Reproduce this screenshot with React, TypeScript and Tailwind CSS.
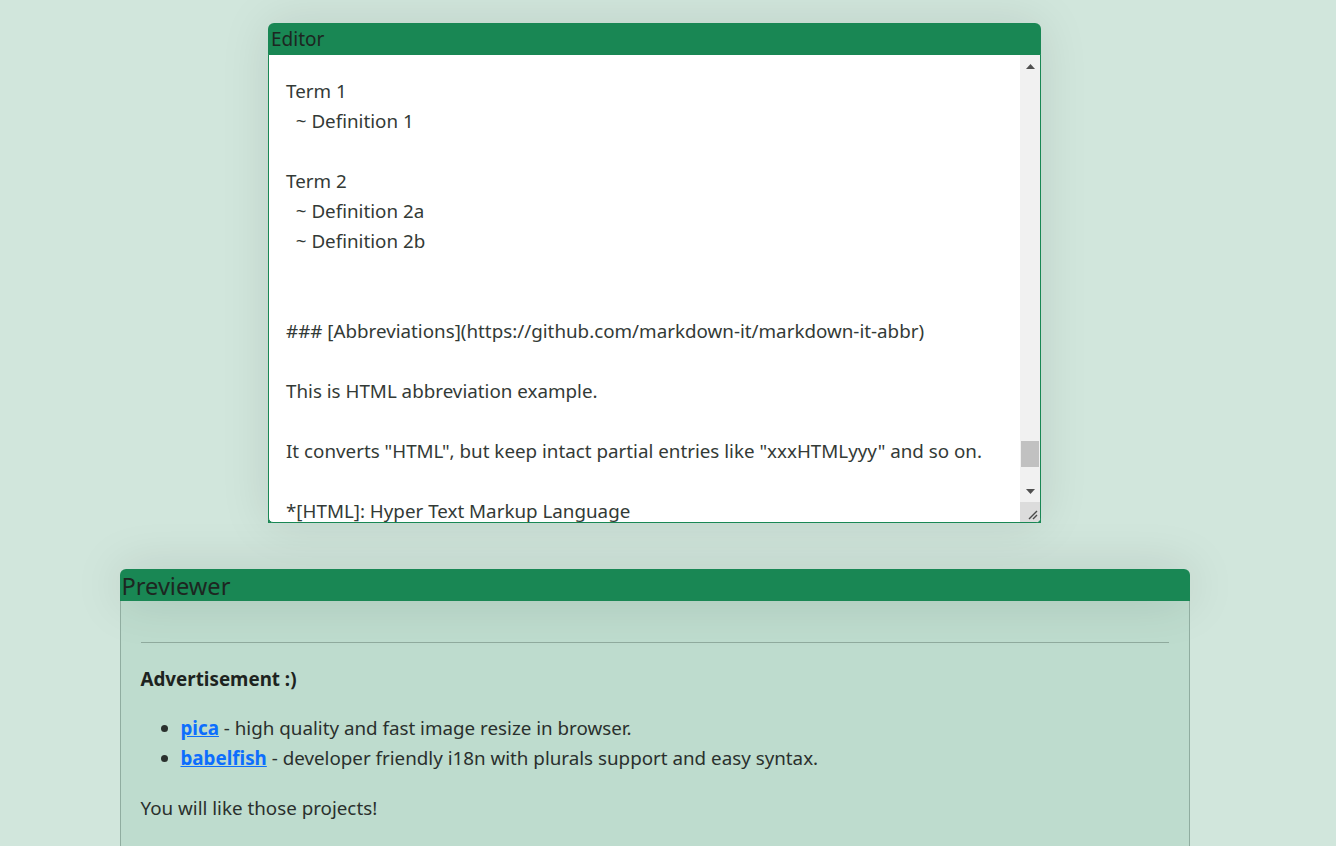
import React from "react";

const editorLines = [
  "Term 1",
  "  ~ Definition 1",
  "",
  "Term 2",
  "  ~ Definition 2a",
  "  ~ Definition 2b",
  "",
  "",
  "### [Abbreviations](https://github.com/markdown-it/markdown-it-abbr)",
  "",
  "This is HTML abbreviation example.",
  "",
  'It converts "HTML", but keep intact partial entries like "xxxHTMLyyy" and so on.',
  "",
  "*[HTML]: Hyper Text Markup Language",
];

const ScrollBar = () => (
  <div className="flex w-[20px] shrink-0 flex-col bg-[#f1f1f1]">
    <div className="flex h-[22px] items-center justify-center">
      <svg width="9" height="5" viewBox="0 0 9 5">
        <path d="M0 5 L4.5 0 L9 5 Z" fill="#505050" />
      </svg>
    </div>
    <div className="flex flex-1 flex-col">
      <div className="h-[364px]" />
      <div className="mx-[1px] h-[26px] bg-[#c1c1c1]" />
    </div>
    <div className="flex h-[22px] items-center justify-center">
      <svg width="9" height="5" viewBox="0 0 9 5">
        <path d="M0 0 L4.5 5 L9 0 Z" fill="#505050" />
      </svg>
    </div>
    <div className="flex h-[20px] items-end justify-end bg-[#dcdcdc] pb-[2px] pr-[2px]">
      <svg width="12" height="12" viewBox="0 0 12 12">
        <path d="M11 3 L3 11 M11 7 L7 11" stroke="#4a4a4a" strokeWidth="1.4" />
      </svg>
    </div>
  </div>
);

const Editor = () => (
  <div className="w-[773px] rounded-t-[6px] bg-[#198754] shadow-[0_0_50px_rgba(0,0,0,0.1)]">
    <div className="h-[31px] pl-[3px] text-[19px] leading-[33px] text-[#1d2621]">Editor</div>
    <div className="flex h-[469px] overflow-hidden rounded-b-[5px] border border-[#198754] bg-white">
      <div className="flex-1 overflow-hidden whitespace-pre pl-[17px] pt-[21px] text-[18.8px] leading-[30px] text-[#333a36]">
        {editorLines.map((l, i) => (
          <div key={i} className="h-[30px]">
            {l}
          </div>
        ))}
      </div>
      <ScrollBar />
    </div>
  </div>
);

const Previewer = () => (
  <div className="w-[1070px]">
    <div className="relative h-[32px] rounded-t-[6px] bg-[#198754] pl-[2px] text-[23.6px] leading-[34px] text-[#1d2621] shadow-[0_0_50px_rgba(0,0,0,0.13)]">
      Previewer
    </div>
    <div className="relative h-[300px] border-x border-[#90ada0] bg-[#198754]/10 px-[20px] pt-[41px] text-[18.8px] leading-[30px] text-[#2a302d]">
      <hr className="border-t border-[#8faa9d]" />
      <p className="mt-[21px] font-bold text-[#1d2320]">Advertisement :)</p>
      <ul className="mt-[19px] list-disc pl-[40px]">
        <li>
          <a href="#" className="font-bold text-[#0d6efd] underline">
            pica
          </a>{" "}
          - high quality and fast image resize in browser.
        </li>
        <li>
          <a href="#" className="font-bold text-[#0d6efd] underline">
            babelfish
          </a>{" "}
          - developer friendly i18n with plurals support and easy syntax.
        </li>
      </ul>
      <p className="mt-[20px]">You will like those projects!</p>
    </div>
  </div>
);

export default function App() {
  return (
    <div className="h-[846px] w-full overflow-hidden bg-[#d1e6dc] font-['Noto_Sans',sans-serif]">
      <div className="flex w-[1309px] flex-col items-center pt-[23px]">
        <Editor />
        <div className="h-[46px]" />
        <Previewer />
      </div>
    </div>
  );
}
